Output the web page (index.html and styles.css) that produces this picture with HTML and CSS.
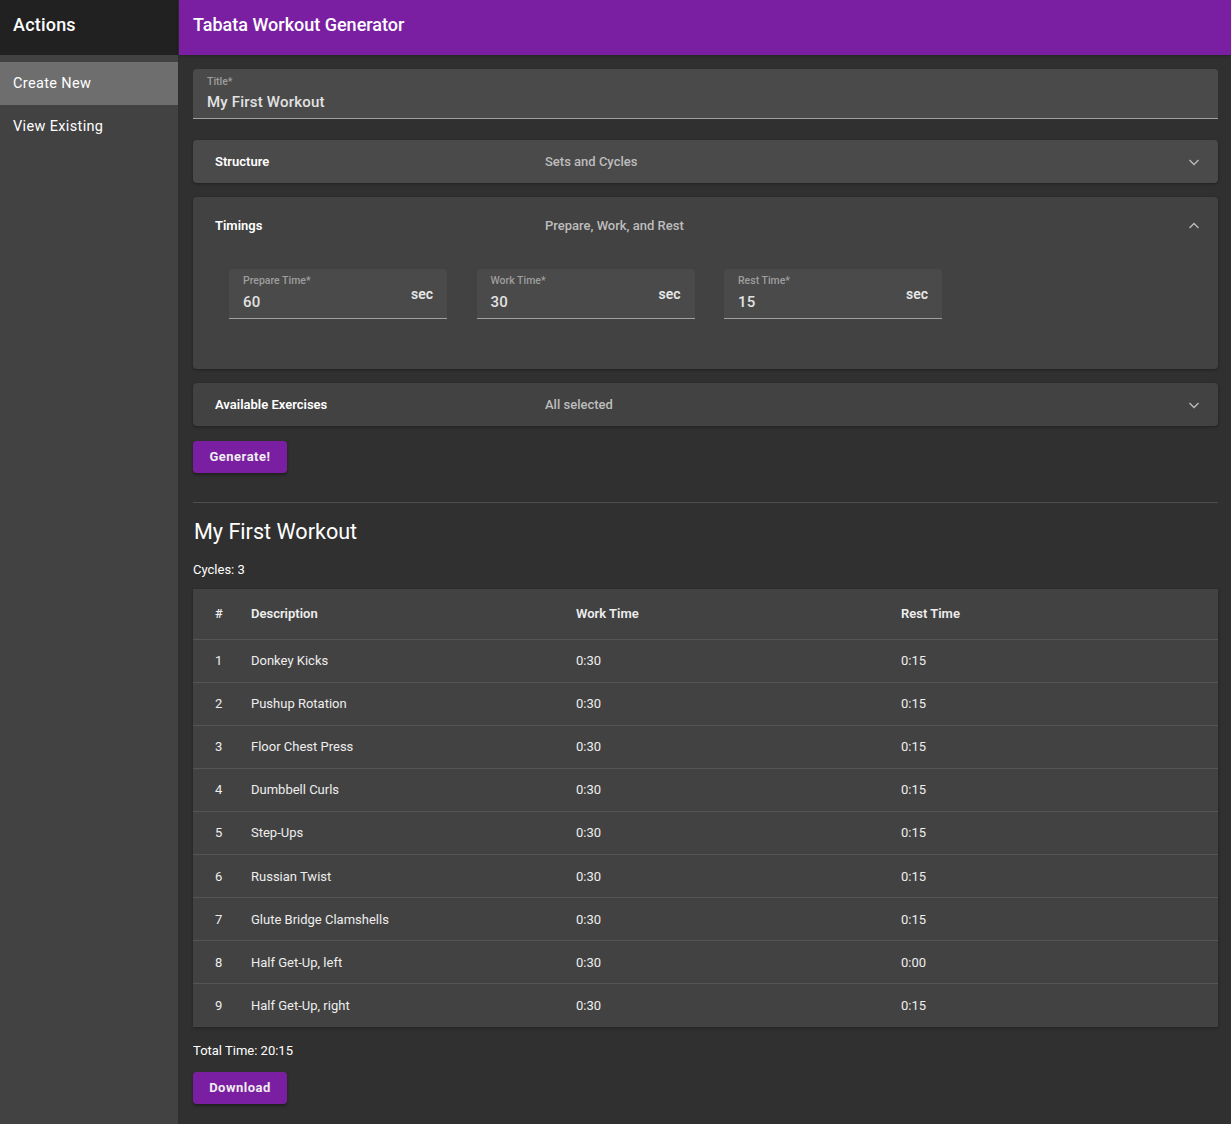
FILE: index.html
```html
<!DOCTYPE html>
<html>
<head>
<meta charset="utf-8">
<link rel="stylesheet" href="styles.css">
</head>
<body>
<div class="app">
  <aside class="sidebar">
    <div class="side-head">Actions</div>
    <ul class="side-list">
      <li class="side-item active">Create New</li>
      <li class="side-item">View Existing</li>
    </ul>
  </aside>
  <div class="main">
    <header class="appbar">Tabata Workout Generator</header>
    <main class="content">
      <div class="field title-field">
        <div class="field-label">Title*</div>
        <div class="field-value">My First Workout</div>
      </div>

      <div class="panel hover">
        <div class="panel-head">
          <span class="ph-title">Structure</span>
          <span class="ph-sub">Sets and Cycles</span>
          <svg class="chev" width="12" height="8" viewBox="0 0 12 8"><polyline points="1.5,2 6,6.5 10.5,2" fill="none" stroke="#bdbdbd" stroke-width="1.3"/></svg>
        </div>
      </div>

      <div class="panel open">
        <div class="panel-head">
          <span class="ph-title">Timings</span>
          <span class="ph-sub">Prepare, Work, and Rest</span>
          <svg class="chev" width="12" height="8" viewBox="0 0 12 8"><polyline points="1.5,6 6,1.5 10.5,6" fill="none" stroke="#bdbdbd" stroke-width="1.3"/></svg>
        </div>
        <div class="panel-body">
          <div class="field small">
            <div class="field-label">Prepare Time*</div>
            <div class="field-row"><span class="field-value">60</span><span class="adorn">sec</span></div>
          </div>
          <div class="field small">
            <div class="field-label">Work Time*</div>
            <div class="field-row"><span class="field-value">30</span><span class="adorn">sec</span></div>
          </div>
          <div class="field small">
            <div class="field-label">Rest Time*</div>
            <div class="field-row"><span class="field-value">15</span><span class="adorn">sec</span></div>
          </div>
        </div>
      </div>

      <div class="panel">
        <div class="panel-head">
          <span class="ph-title">Available Exercises</span>
          <span class="ph-sub">All selected</span>
          <svg class="chev" width="12" height="8" viewBox="0 0 12 8"><polyline points="1.5,2 6,6.5 10.5,2" fill="none" stroke="#bdbdbd" stroke-width="1.3"/></svg>
        </div>
      </div>

      <button class="btn gen">Generate!</button>

      <hr class="divider">

      <h2 class="wtitle">My First Workout</h2>
      <p class="cycles">Cycles: 3</p>

      <table class="wtable">
        <colgroup>
          <col class="c1"><col class="c2"><col class="c3"><col class="c4">
        </colgroup>
        <thead>
          <tr><th>#</th><th>Description</th><th>Work Time</th><th>Rest Time</th></tr>
        </thead>
        <tbody>
          <tr><td>1</td><td>Donkey Kicks</td><td>0:30</td><td>0:15</td></tr>
          <tr><td>2</td><td>Pushup Rotation</td><td>0:30</td><td>0:15</td></tr>
          <tr><td>3</td><td>Floor Chest Press</td><td>0:30</td><td>0:15</td></tr>
          <tr><td>4</td><td>Dumbbell Curls</td><td>0:30</td><td>0:15</td></tr>
          <tr><td>5</td><td>Step-Ups</td><td>0:30</td><td>0:15</td></tr>
          <tr><td>6</td><td>Russian Twist</td><td>0:30</td><td>0:15</td></tr>
          <tr><td>7</td><td>Glute Bridge Clamshells</td><td>0:30</td><td>0:15</td></tr>
          <tr><td>8</td><td>Half Get-Up, left</td><td>0:30</td><td>0:00</td></tr>
          <tr><td>9</td><td>Half Get-Up, right</td><td>0:30</td><td>0:15</td></tr>
        </tbody>
      </table>

      <p class="total">Total Time: 20:15</p>
      <button class="btn dl">Download</button>
    </main>
  </div>
</div>
</body>
</html>
```
FILE: styles.css
```css
* { box-sizing: border-box; }
html, body { margin: 0; padding: 0; }
body {
  font-family: Roboto, "Liberation Sans", Arial, sans-serif;
  background: #303030;
  color: #fff;
  height: 1124px;
  overflow: hidden;
}
.app { display: flex; height: 1124px; }
.sidebar {
  width: 179px;
  flex: none;
  background: #424242;
  border-right: 1px solid #2e2e2e;
}
.side-head {
  height: 55px;
  background: #212121;
  font-size: 18px;
  font-weight: 500;
  letter-spacing: 0.2px;
  padding: 14px 0 0 13px;
  line-height: 22px;
}
.side-list { list-style: none; margin: 0; padding: 7px 0 0; }
.side-item {
  height: 43px;
  line-height: 43px;
  padding-left: 13px;
  font-size: 14.5px;
  letter-spacing: 0.35px;
  color: #fff;
}
.side-item.active { background: #6e6e6e; }
.main { flex: 1; display: flex; flex-direction: column; min-width: 0; }
.appbar {
  height: 55px;
  background: #7b1fa2;
  font-size: 18px;
  font-weight: 500;
  padding: 14px 0 0 14px;
  line-height: 22px;
  flex: none;
  box-shadow: 0 1px 3px rgba(0,0,0,0.25);
}
.content { padding: 14px 13px 0 14px; display: flex; flex-direction: column; align-items: flex-start; }
.field {
  background: #4a4a4a;
  border-radius: 4px 4px 0 0;
  border-bottom: 1px solid #a0a0a0;
}
.title-field { width: 100%; height: 50px; padding: 7px 14px 0; }
.field-label { font-size: 10.5px; color: #9e9e9e; font-weight: 500; line-height: 12px; }
.field-value { font-size: 15px; letter-spacing: 0.2px; color: #e2e2e2; font-weight: 500; line-height: 20px; margin-top: 4px; display: block; }
.panel {
  width: 100%;
  background: #424242;
  border-radius: 4px;
  box-shadow: 0 1px 3px rgba(0,0,0,0.35);
  margin-top: 21px;
}
.panel.hover { background: #4a4a4a; }
.panel.open { margin-top: 14px; height: 172px; }
.panel + .panel:not(.open) { margin-top: 14px; }
.panel-head {
  height: 43px;
  display: flex;
  align-items: center;
  padding: 0 18px 0 22px;
  font-size: 13px;
  font-weight: 600;
}
.panel.open .panel-head { height: 57px; }
.ph-title { width: 330px; color: #fff; }
.ph-sub { flex: 1; color: #bdbdbd; font-weight: 500; }
.chev { flex: none; }
.panel-body { display: flex; gap: 29.5px; padding: 15px 0 0 36px; }
.field.small { width: 218px; height: 50px; padding: 6px 14px 0; }
.field-row { display: flex; justify-content: space-between; align-items: flex-start; }
.field.small .field-value { margin-top: 5px; }
.adorn { font-size: 14px; font-weight: 600; color: #e6e6e6; margin-top: -1px; }
.btn {
  font-family: inherit;
  background: #7b1fa2;
  color: #eee;
  border: none;
  border-radius: 4px;
  width: 94px;
  height: 32px;
  font-size: 13px;
  font-weight: 700;
  letter-spacing: 0.5px;
  box-shadow: 0 2px 3px rgba(0,0,0,0.35);
  padding: 0 0 1px;
}
.gen { margin-top: 15px; }
.divider { width: 100%; border: none; border-top: 1px solid #4e4e4e; margin: 29px 0 0; }
.wtitle { font-size: 21.6px; font-weight: 400; margin: 16px 0 0 1px; line-height: 26px; }
.cycles { font-size: 13px; margin: 17px 0 0; line-height: 16px; }
.wtable {
  width: 100%;
  margin-top: 11px;
  background: #424242;
  border-collapse: collapse;
  table-layout: fixed;
  font-size: 13px;
  box-shadow: 0 1px 3px rgba(0,0,0,0.3);
}
.c1 { width: 42px; }
.c2 { width: 325px; }
.c3 { width: 325px; }
.wtable th, .wtable td { text-align: left; padding: 0 0 0 16px; border-bottom: 1px solid #555; }
.wtable th:first-child, .wtable td:first-child { padding-left: 22px; }
.wtable th { height: 50px; font-weight: 600; color: #eee; }
.wtable td { height: 43.1px; color: #eee; }
.wtable tbody tr:last-child td { border-bottom: none; height: 43px; }
.total { font-size: 13px; margin: 16px 0 0; line-height: 16px; }
.dl { margin-top: 13px; }
```
